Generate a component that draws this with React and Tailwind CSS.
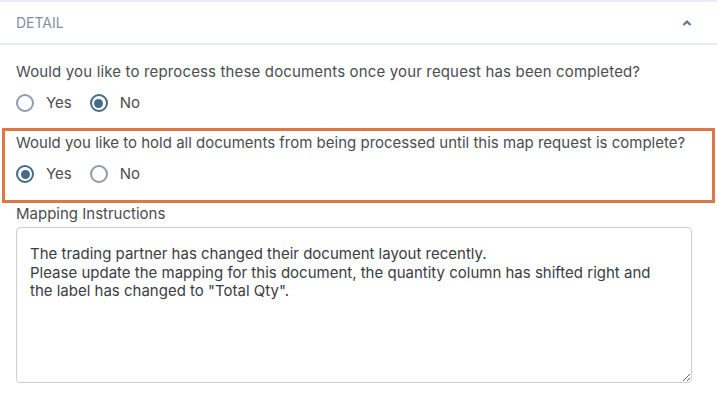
import React, { useState } from "react";

function Radio({ checked, label, onClick }) {
  return (
    <label className="flex cursor-pointer items-center gap-3" onClick={onClick}>
      <span
        className={`flex size-[18px] items-center justify-center rounded-full border-2 ${
          checked ? "border-[#466a88]" : "border-[#8d9cb0]"
        }`}
      >
        {checked && <span className="size-[9px] rounded-full bg-[#466a88]" />}
      </span>
      <span>{label}</span>
    </label>
  );
}

function YesNo({ value, onChange }) {
  return (
    <div className="flex h-[20px] items-center gap-[18px]">
      <Radio checked={value === "yes"} label="Yes" onClick={() => onChange("yes")} />
      <Radio checked={value === "no"} label="No" onClick={() => onChange("no")} />
    </div>
  );
}

export default function App() {
  const [reprocess, setReprocess] = useState("no");
  const [hold, setHold] = useState("yes");

  return (
    <div
      className="h-[399px] w-[717px] overflow-hidden bg-white text-[15px] text-[#4a4d52]"
      style={{ fontFamily: "Inter, 'Noto Sans', sans-serif" }}
    >
      <div className="flex h-[45px] items-center justify-between border-y-2 border-[#e8ecf8] px-4">
        <span className="text-[14px] uppercase text-[#8190a5]">Detail</span>
        <svg
          className="mr-[8px] size-[12px] text-[#66748a]"
          viewBox="0 0 12 12"
          fill="none"
          stroke="currentColor"
          strokeWidth="2.2"
        >
          <path d="M2.5 8 L6 4.5 L9.5 8" />
        </svg>
      </div>

      <div className="px-4 pt-[17px]">
        <p className="leading-[20px] tracking-[0.15px]">
          Would you like to reprocess these documents once your request has been completed?
        </p>
        <div className="mt-[11px]">
          <YesNo value={reprocess} onChange={setReprocess} />
        </div>
      </div>

      <div className="mx-[2px] mt-[15px] border-[3px] border-[#df7743] px-[11px] pb-[16px] pt-[2px]">
        <p className="leading-[20px]">
          Would you like to hold all documents from being processed until this map request is complete?
        </p>
        <div className="mt-[11px]">
          <YesNo value={hold} onChange={setHold} />
        </div>
      </div>

      <div className="px-4 pt-[1px]">
        <p className="leading-[20px]">Mapping Instructions</p>
        <textarea
          className="mt-[3px] block h-[156px] w-[676px] resize-y rounded-[4px] border border-[#cfcfcf] pb-[16px] pl-[13px] pr-[24px] pt-[17px] text-[15px] leading-[18.5px] text-[#3a3d42] outline-none"
          defaultValue={
            'The trading partner has changed their document layout recently.\nPlease update the mapping for this document, the quantity column has shifted right and the label has changed to "Total Qty".'
          }
        />
      </div>
    </div>
  );
}
